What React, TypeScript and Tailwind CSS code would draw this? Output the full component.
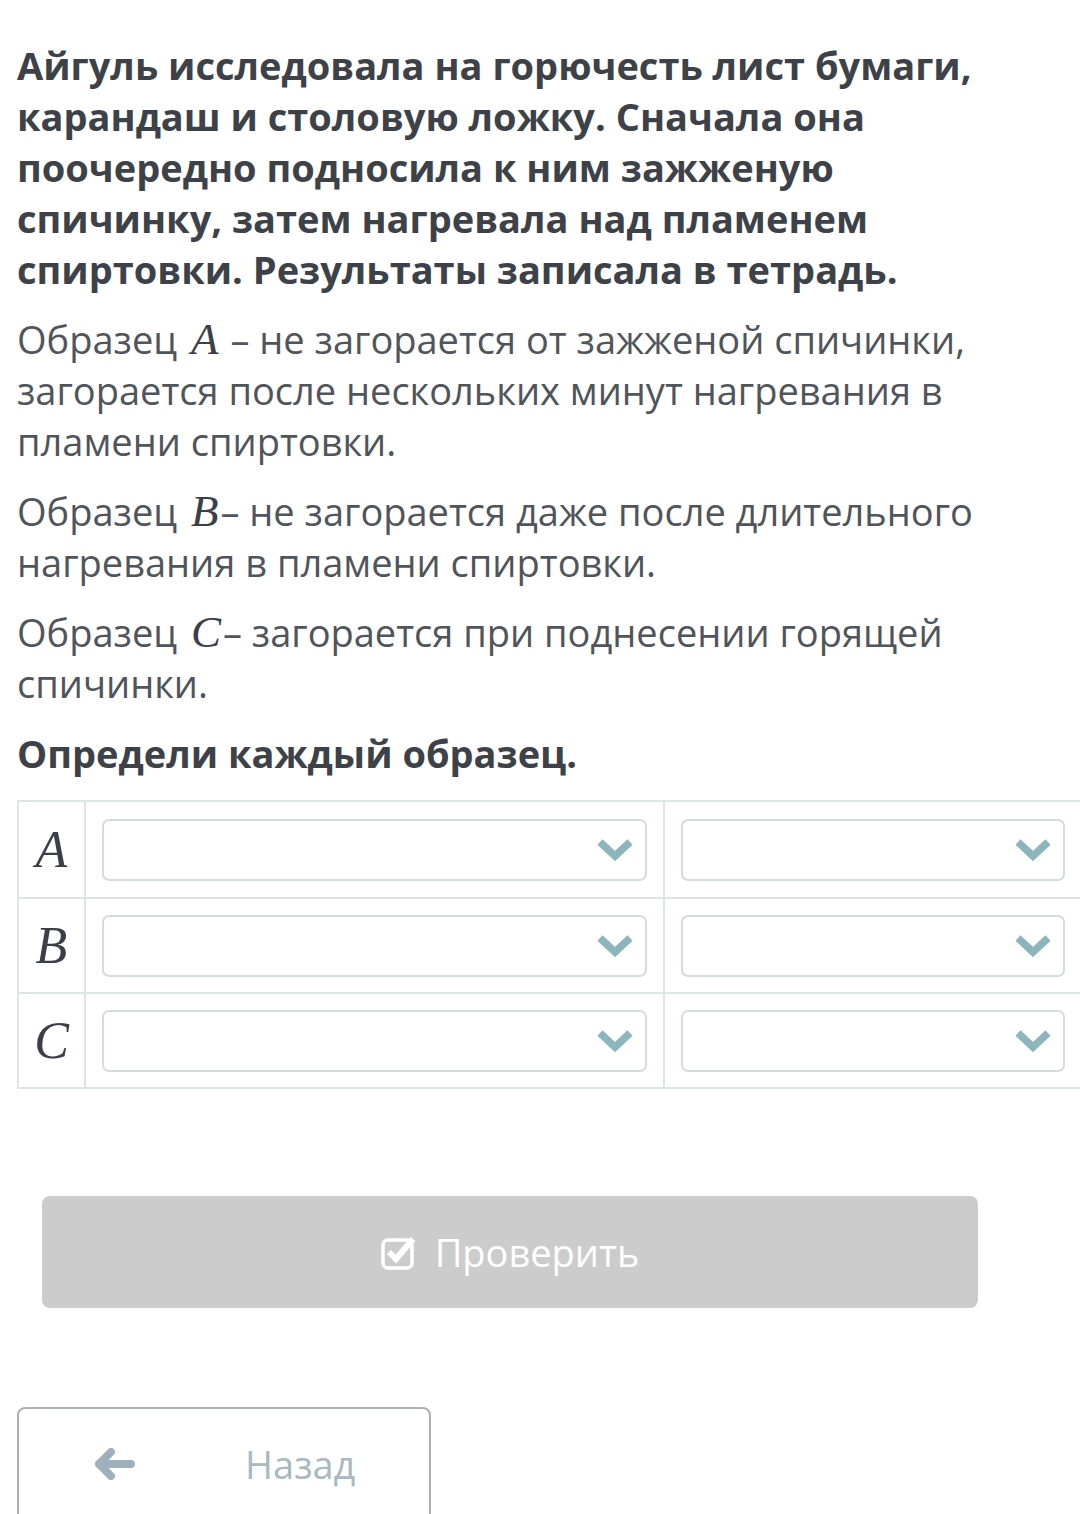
import React from "react"

const rows = ["A", "B", "C"]

function Chevron() {
  return (
    <svg width="36" height="26" viewBox="0 0 36 26" className="shrink-0">
      <path d="M3 5 L18 19 L33 5" fill="none" stroke="#8cb6bc" strokeWidth="7.5" strokeLinecap="butt" strokeLinejoin="miter" />
    </svg>
  )
}

function SelectBox() {
  return (
    <div className="h-[62px] rounded-[7px] border-2 border-[#d3dddd] bg-white flex items-center justify-end pr-[12px]">
      <Chevron />
    </div>
  )
}

function MathVar({ v, after }: { v: string; after?: boolean }) {
  return (
    <span className={`inline-block ml-[4px] ${after ? "mr-[12px]" : "mr-[2px]"} font-['Liberation_Serif',serif] italic text-[45px] leading-none text-[#3b4048]`}>
      {v}
    </span>
  )
}

export default function App() {
  return (
    <div className="w-[1080px] h-[1514px] overflow-hidden bg-white font-['Open_Sans',sans-serif]">
      <div className="pl-[17px] pr-[48px] pt-[40px] text-[38px] leading-[51px]">
        <p className="font-bold text-[#3d4249]">
          Айгуль исследовала на горючесть лист бумаги, карандаш и столовую ложку. Сначала она поочередно подносила к ним зажженую спичинку, затем нагревала над пламенем спиртовки. Результаты записала в тетрадь.
        </p>
        <p className="mt-[19px] text-[#50555b]">
          Образец <MathVar v="A" after />– не загорается от зажженой спичинки, загорается после нескольких минут нагревания в пламени спиртовки.
        </p>
        <p className="mt-[19px] text-[#50555b]">
          Образец <MathVar v="B" />– не загорается даже после длительного нагревания в пламени спиртовки.
        </p>
        <p className="mt-[19px] text-[#50555b]">
          Образец <MathVar v="C" />– загорается при поднесении горящей спичинки.
        </p>
        <p className="mt-[19px] font-bold text-[#3d4249]">Определи каждый образец.</p>
      </div>

      <div className="ml-[17px] mt-[21px] w-[1066px] border-2 border-[#dde4e4]">
        {rows.map((r, i) => (
          <div key={r} className={`flex h-[95px] ${i > 0 ? "border-t-2 border-[#dde4e4]" : ""}`}>
            <div className="w-[67px] shrink-0 flex items-center justify-center border-r-2 border-[#dde4e4]">
              <span className="font-['Liberation_Serif',serif] italic text-[52px] leading-none text-[#3b4048]">{r}</span>
            </div>
            <div className="w-[579px] shrink-0 px-[16px] flex flex-col justify-center border-r-2 border-[#dde4e4]">
              <SelectBox />
            </div>
            <div className="flex-1 px-[16px] flex flex-col justify-center">
              <SelectBox />
            </div>
          </div>
        ))}
      </div>

      <div className="ml-[42px] mt-[107px] w-[936px] h-[112px] rounded-[8px] bg-[#cccccc] flex items-center justify-center gap-[16px]">
        <svg width="38" height="36" viewBox="0 0 38 36">
          <rect x="2" y="6" width="29" height="28" rx="5" fill="none" stroke="#ffffff" strokeWidth="3.5" />
          <path d="M8 18 L15 25 L32 5" fill="none" stroke="#ffffff" strokeWidth="6" />
        </svg>
        <span className="text-white text-[38px]">Проверить</span>
      </div>

      <div className="ml-[17px] mt-[99px] w-[414px] h-[130px] rounded-[8px] border-2 border-[#aab2b6] flex items-start">
        <div className="w-full h-[110px] flex items-center">
          <svg width="40" height="32" viewBox="0 0 40 32" className="ml-[76px]">
            <path d="M4 16 L16 4 M4 16 L16 28 M4 16 L36 16" fill="none" stroke="#9eb0bc" strokeWidth="8" strokeLinecap="round" strokeLinejoin="round" />
          </svg>
          <span className="ml-[110px] text-[38px] text-[#a9b9c1]">Назад</span>
        </div>
      </div>
    </div>
  )
}
